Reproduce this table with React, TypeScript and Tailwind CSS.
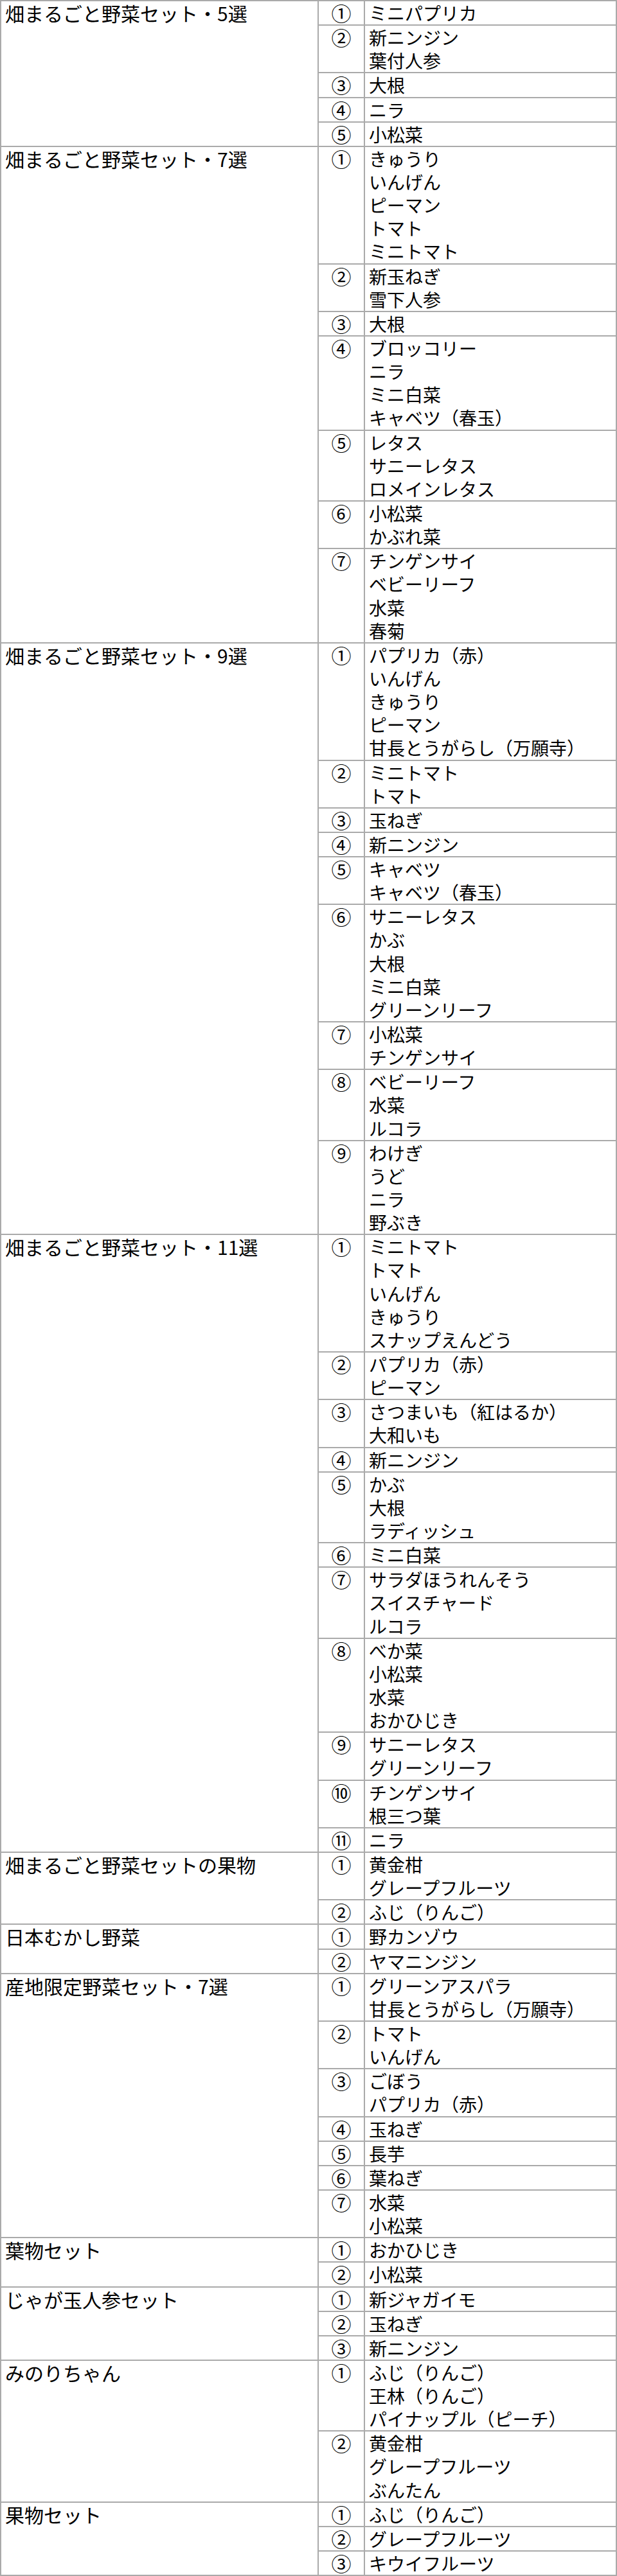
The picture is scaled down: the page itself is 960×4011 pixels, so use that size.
const marks = ["①", "②", "③", "④", "⑤", "⑥", "⑦", "⑧", "⑨", "⑩", "⑪"];

type VegSet = { name: string; groups: string[][] };

const sets: VegSet[] = [
  {
    name: "畑まるごと野菜セット・5選",
    groups: [["ミニパプリカ"], ["新ニンジン", "葉付人参"], ["大根"], ["ニラ"], ["小松菜"]],
  },
  {
    name: "畑まるごと野菜セット・7選",
    groups: [
      ["きゅうり", "いんげん", "ピーマン", "トマト", "ミニトマト"],
      ["新玉ねぎ", "雪下人参"],
      ["大根"],
      ["ブロッコリー", "ニラ", "ミニ白菜", "キャベツ（春玉）"],
      ["レタス", "サニーレタス", "ロメインレタス"],
      ["小松菜", "かぶれ菜"],
      ["チンゲンサイ", "ベビーリーフ", "水菜", "春菊"],
    ],
  },
  {
    name: "畑まるごと野菜セット・9選",
    groups: [
      ["パプリカ（赤）", "いんげん", "きゅうり", "ピーマン", "甘長とうがらし（万願寺）"],
      ["ミニトマト", "トマト"],
      ["玉ねぎ"],
      ["新ニンジン"],
      ["キャベツ", "キャベツ（春玉）"],
      ["サニーレタス", "かぶ", "大根", "ミニ白菜", "グリーンリーフ"],
      ["小松菜", "チンゲンサイ"],
      ["ベビーリーフ", "水菜", "ルコラ"],
      ["わけぎ", "うど", "ニラ", "野ぶき"],
    ],
  },
  {
    name: "畑まるごと野菜セット・11選",
    groups: [
      ["ミニトマト", "トマト", "いんげん", "きゅうり", "スナップえんどう"],
      ["パプリカ（赤）", "ピーマン"],
      ["さつまいも（紅はるか）", "大和いも"],
      ["新ニンジン"],
      ["かぶ", "大根", "ラディッシュ"],
      ["ミニ白菜"],
      ["サラダほうれんそう", "スイスチャード", "ルコラ"],
      ["べか菜", "小松菜", "水菜", "おかひじき"],
      ["サニーレタス", "グリーンリーフ"],
      ["チンゲンサイ", "根三つ葉"],
      ["ニラ"],
    ],
  },
  {
    name: "畑まるごと野菜セットの果物",
    groups: [["黄金柑", "グレープフルーツ"], ["ふじ（りんご）"]],
  },
  {
    name: "日本むかし野菜",
    groups: [["野カンゾウ"], ["ヤマニンジン"]],
  },
  {
    name: "産地限定野菜セット・7選",
    groups: [
      ["グリーンアスパラ", "甘長とうがらし（万願寺）"],
      ["トマト", "いんげん"],
      ["ごぼう", "パプリカ（赤）"],
      ["玉ねぎ"],
      ["長芋"],
      ["葉ねぎ"],
      ["水菜", "小松菜"],
    ],
  },
  {
    name: "葉物セット",
    groups: [["おかひじき"], ["小松菜"]],
  },
  {
    name: "じゃが玉人参セット",
    groups: [["新ジャガイモ"], ["玉ねぎ"], ["新ニンジン"]],
  },
  {
    name: "みのりちゃん",
    groups: [
      ["ふじ（りんご）", "王林（りんご）", "パイナップル（ピーチ）"],
      ["黄金柑", "グレープフルーツ", "ぶんたん"],
    ],
  },
  {
    name: "果物セット",
    groups: [["ふじ（りんご）"], ["グレープフルーツ"], ["キウイフルーツ"]],
  },
];

const cell = "border-r-2 border-b-2 border-[#aaaaaa] align-top p-0";

export default function App() {
  return (
    <div className="w-[960px] bg-white text-black font-['Noto_Sans_CJK_JP',sans-serif]">
      <table className="w-[960px] table-fixed border-separate border-spacing-0 border-l-2 border-t-2 border-[#aaaaaa]">
        <colgroup>
          <col className="w-[494px]" />
          <col className="w-[72px]" />
          <col />
        </colgroup>
        <tbody>
          {sets.map((set) =>
            set.groups.map((items, gi) => (
              <tr key={set.name + gi}>
                {gi === 0 && (
                  <td
                    rowSpan={set.groups.length}
                    className={`${cell} pl-[6px] text-[30px] leading-[36.14px]`}
                  >
                    {set.name}
                  </td>
                )}
                <td className={`${cell} text-center text-[31px] leading-[36.14px]`}>
                  {marks[gi]}
                </td>
                <td className={`${cell} pl-[6px] text-[28px] leading-[36.14px]`}>
                  {items.map((item, i) => (
                    <div key={i}>{item}</div>
                  ))}
                </td>
              </tr>
            ))
          )}
        </tbody>
      </table>
    </div>
  );
}
